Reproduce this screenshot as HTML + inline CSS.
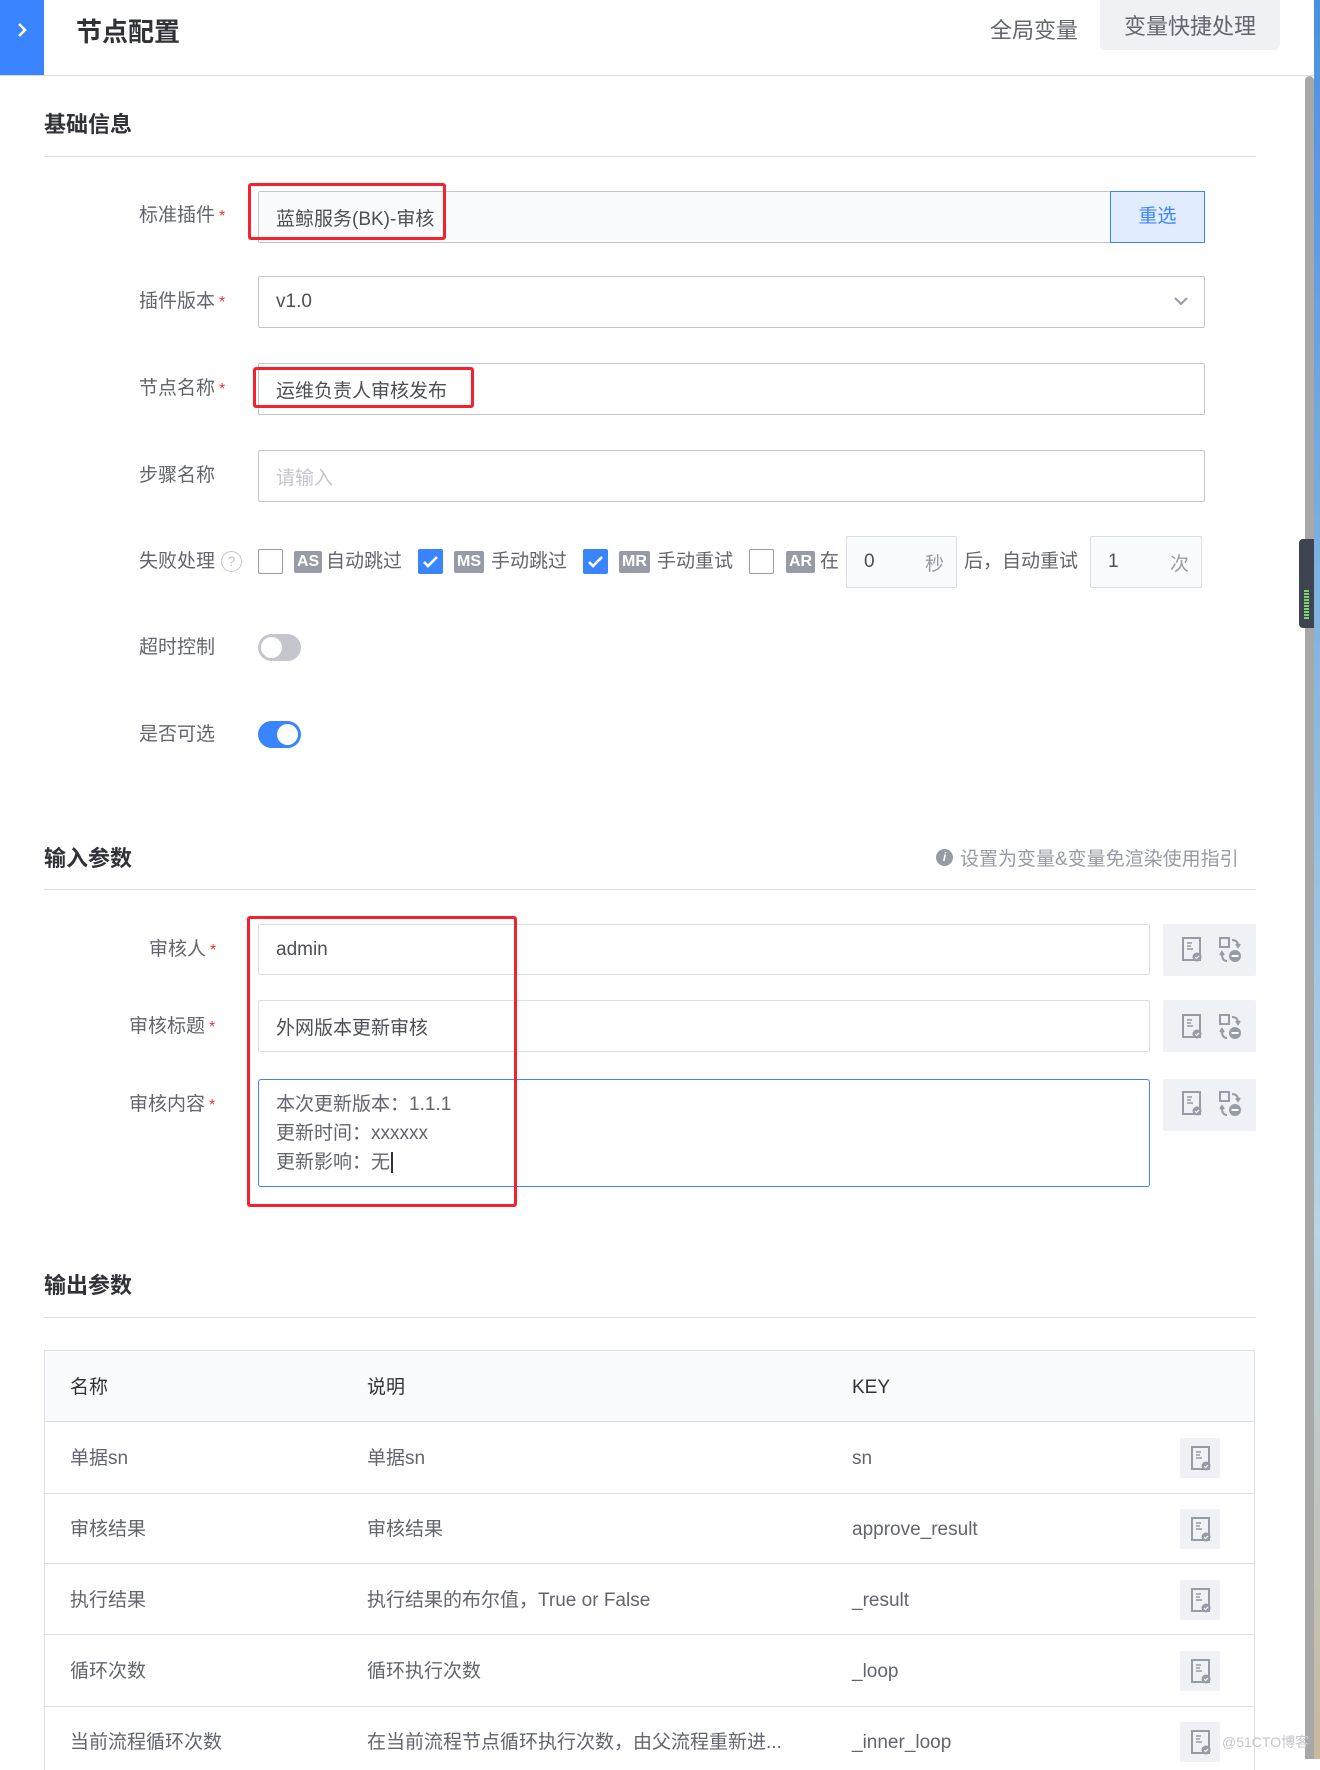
<!DOCTYPE html>
<html><head><meta charset="utf-8"><style>
*{box-sizing:border-box;margin:0;padding:0}
body{width:1320px;height:1759px;position:relative;overflow:hidden;background:#fff;font-family:"Liberation Sans","Noto Sans CJK SC",sans-serif;color:#63656e}
.a{position:absolute}
.lbl{position:absolute;font-size:19px;color:#63656e;line-height:24px}
.req{color:#ea3636;font-size:16px;margin-left:4px}
.inp{position:absolute;border:1px solid #c4c6cc;border-radius:2px;background:#fff;font-size:19px;color:#4d4f56;padding-left:17px;display:flex;align-items:center}
.sec{position:absolute;left:44px;font-size:22px;font-weight:bold;color:#313238}
.line{position:absolute;left:44px;width:1212px;height:1px;background:#dcdee5}
.red{position:absolute;border:3px solid #f5222d;border-radius:3px}
.cb{position:absolute;width:25px;height:25px;border:1px solid #979ba5;border-radius:2px;background:#fff;top:549px}
.cb.on{background:#3a84ff;border-color:#3a84ff}
.tag{position:absolute;top:551px;height:22px;padding:0 3px;background:#979ba5;color:#fff;font-size:16px;line-height:22px;border-radius:2px;font-weight:bold}
.t{position:absolute;font-size:19px;line-height:24px;top:550px;color:#63656e}
.ib{position:absolute;left:1163px;width:93px;height:52px;background:#f0f1f5;border-radius:2px}
.td{position:absolute;font-size:19px;color:#63656e;line-height:24px}
.rb{position:absolute;left:1180px;width:40px;height:40px;background:#f0f1f5;border-radius:2px}
</style></head><body>
<div class="a" style="left:1314px;top:0;width:6px;height:1759px;background:linear-gradient(#4a90e2,#8ab8e0 40%,#b7d6e6 70%,#c9b89a)"></div>
<div class="a" style="left:0;top:0;width:44px;height:75px;background:#3a84ff"></div>
<svg class="a" style="left:12px;top:20px" width="20" height="20" viewBox="0 0 20 20"><path d="M7 4l6 6-6 6" stroke="#fff" stroke-width="2.5" fill="none"/></svg>
<div class="a" style="left:76px;top:12px;font-size:26px;font-weight:bold;color:#313238">节点配置</div>
<div class="a" style="left:990px;top:13px;font-size:22px;color:#63656e">全局变量</div>
<div class="a" style="left:1100px;top:0;width:180px;height:50px;background:#f0f1f5;border-radius:0 0 6px 6px;font-size:22px;line-height:54px;text-align:center;color:#63656e">变量快捷处理</div>
<div class="a" style="left:0;top:75px;width:1314px;height:1px;background:#dcdee5"></div>
<div class="a" style="left:1305px;top:76px;width:9px;height:1683px;background:#a8a8a8;border-radius:5px 5px 0 0"></div>
<div class="a" style="left:1299px;top:539px;width:15px;height:89px;background:#3e4350;border-radius:4px 0 0 4px"></div>
<div class="a" style="left:1304px;top:590px;width:5px;height:30px;background:repeating-linear-gradient(#7dd36f 0 2px,#3e4350 2px 3px)"></div>

<div class="sec" style="top:107px">基础信息</div>
<div class="line" style="top:156px"></div>

<div class="lbl" style="left:139px;top:204px">标准插件<span class="req">*</span></div>
<div class="inp" style="left:258px;top:191px;width:853px;height:52px;background:#fafbfd">蓝鲸服务(BK)-审核</div>
<div class="a" style="left:1110px;top:191px;width:95px;height:52px;background:#e1ecff;border:1px solid #3a84ff;color:#3a84ff;font-size:19px;line-height:50px;text-align:center">重选</div>
<div class="red" style="left:248px;top:183px;width:198px;height:57px"></div>

<div class="lbl" style="left:139px;top:290px">插件版本<span class="req">*</span></div>
<div class="inp" style="left:258px;top:276px;width:947px;height:52px">v1.0</div>
<svg class="a" style="left:1173px;top:295px" width="16" height="12" viewBox="0 0 16 12"><path d="M2 3l6 6 6-6" stroke="#979ba5" stroke-width="2" fill="none"/></svg>

<div class="lbl" style="left:139px;top:377px">节点名称<span class="req">*</span></div>
<div class="inp" style="left:258px;top:363px;width:947px;height:52px">运维负责人审核发布</div>
<div class="red" style="left:253px;top:367px;width:221px;height:41px"></div>

<div class="lbl" style="left:139px;top:464px">步骤名称</div>
<div class="inp" style="left:258px;top:450px;width:947px;height:52px;color:#c4c6cc">请输入</div>

<div class="lbl" style="left:139px;top:550px">失败处理</div>
<div class="a" style="left:221px;top:551px;width:21px;height:21px;border:1px solid #c4c6cc;border-radius:50%;font-size:14px;line-height:19px;text-align:center;color:#c4c6cc">?</div>
<div class="cb" style="left:258px"></div>
<div class="tag" style="left:294px">AS</div><div class="t" style="left:326px">自动跳过</div>
<div class="cb on" style="left:418px"><svg width="23" height="23" viewBox="0 0 23 23"><path d="M5 12l4 4 9-9" stroke="#fff" stroke-width="2.6" fill="none"/></svg></div>
<div class="tag" style="left:454px">MS</div><div class="t" style="left:491px">手动跳过</div>
<div class="cb on" style="left:583px"><svg width="23" height="23" viewBox="0 0 23 23"><path d="M5 12l4 4 9-9" stroke="#fff" stroke-width="2.6" fill="none"/></svg></div>
<div class="tag" style="left:619px">MR</div><div class="t" style="left:657px">手动重试</div>
<div class="cb" style="left:749px"></div>
<div class="tag" style="left:786px">AR</div><div class="t" style="left:820px">在</div>
<div class="inp" style="left:846px;top:536px;width:111px;height:52px;background:#fafbfd;border-color:#dcdee5">0<span style="position:absolute;right:12px;color:#979ba5">秒</span></div>
<div class="t" style="left:964px">后，自动重试</div>
<div class="inp" style="left:1090px;top:536px;width:112px;height:52px;background:#fafbfd;border-color:#dcdee5">1<span style="position:absolute;right:12px;color:#979ba5">次</span></div>

<div class="lbl" style="left:139px;top:636px">超时控制</div>
<div class="a" style="left:258px;top:634px;width:43px;height:27px;border-radius:14px;background:#c4c6cc"><div class="a" style="left:3px;top:3px;width:21px;height:21px;border-radius:50%;background:#fff"></div></div>
<div class="lbl" style="left:139px;top:723px">是否可选</div>
<div class="a" style="left:258px;top:721px;width:43px;height:27px;border-radius:14px;background:#3a84ff"><div class="a" style="left:19px;top:3px;width:21px;height:21px;border-radius:50%;background:#fff"></div></div>

<div class="sec" style="top:841px">输入参数</div>
<div class="a" style="left:936px;top:849px;width:17px;height:17px;border-radius:50%;background:#979ba5;color:#fff;font-size:12px;line-height:17px;text-align:center;font-style:italic;font-weight:bold">i</div>
<div class="a" style="left:960px;top:844px;font-size:19px;color:#979ba5">设置为变量&amp;变量免渲染使用指引</div>
<div class="line" style="top:889px"></div>

<div class="lbl" style="left:149px;top:938px">审核人<span class="req">*</span></div>
<div class="inp" style="left:258px;top:924px;width:892px;height:51px;border-color:#dcdee5">admin</div>
<div class="lbl" style="left:129px;top:1015px">审核标题<span class="req">*</span></div>
<div class="inp" style="left:258px;top:1000px;width:892px;height:52px;border-color:#dcdee5">外网版本更新审核</div>
<div class="lbl" style="left:129px;top:1093px">审核内容<span class="req">*</span></div>
<div class="a" style="left:258px;top:1079px;width:892px;height:108px;border:1px solid #3a84ff;border-radius:3px;font-size:19px;color:#63656e;line-height:29px;padding:10px 0 0 17px">本次更新版本：1.1.1<br>更新时间：xxxxxx<br>更新影响：无<span style="border-left:2px solid #313238;margin-left:1px"></span></div>
<div class="red" style="left:247px;top:916px;width:270px;height:291px"></div>

<div class="ib" style="top:924px"></div><div class="ib" style="top:1000px"></div><div class="ib" style="top:1079px"></div>
<svg width="0" height="0" style="position:absolute"><defs>
<g id="doc"><rect x="1" y="1" width="17" height="22" fill="none" stroke="#979ba5" stroke-width="2"/><path d="M5 6h5M5 9h4M5 12h6" stroke="#979ba5" stroke-width="1.5"/><circle cx="15" cy="20" r="4.5" fill="#979ba5"/><path d="M13 20l1.5 1.5 2.5-2.5" stroke="#fff" stroke-width="1.2" fill="none"/></g>
<g id="sw"><rect x="1" y="1" width="9" height="9" fill="none" stroke="#979ba5" stroke-width="2"/><path d="M13 3c4 0 6 2 6 6M17 7l2 3 2-3M8 24c-4 0-5-3-5-7M1 18l2-3 2 3" stroke="#979ba5" stroke-width="2" fill="none"/><circle cx="16" cy="19" r="6" fill="#979ba5"/><path d="M12.5 19h7" stroke="#fff" stroke-width="2"/></g>
</defs></svg>
<svg class="a" style="left:1182px;top:937px" width="22" height="26"><use href="#doc"/></svg><svg class="a" style="left:1219px;top:937px" width="26" height="26"><use href="#sw"/></svg>
<svg class="a" style="left:1182px;top:1014px" width="22" height="26"><use href="#doc"/></svg><svg class="a" style="left:1219px;top:1014px" width="26" height="26"><use href="#sw"/></svg>
<svg class="a" style="left:1182px;top:1091px" width="22" height="26"><use href="#doc"/></svg><svg class="a" style="left:1219px;top:1091px" width="26" height="26"><use href="#sw"/></svg>

<div class="sec" style="top:1268px">输出参数</div>
<div class="line" style="top:1317px"></div>

<div class="a" style="left:44px;top:1350px;width:1211px;height:420px;border:1px solid #dcdee5;border-bottom:none"></div>
<div class="a" style="left:45px;top:1351px;width:1209px;height:71px;background:#fafbfd;border-bottom:1px solid #dcdee5"></div>
<div class="td" style="left:70px;top:1376px;color:#313238">名称</div><div class="td" style="left:367px;top:1376px;color:#313238">说明</div><div class="td" style="left:852px;top:1376px;color:#313238">KEY</div>
<div class="a" style="left:45px;top:1493px;width:1209px;height:1px;background:#dcdee5"></div>
<div class="a" style="left:45px;top:1563px;width:1209px;height:1px;background:#dcdee5"></div>
<div class="a" style="left:45px;top:1634px;width:1209px;height:1px;background:#dcdee5"></div>
<div class="a" style="left:45px;top:1706px;width:1209px;height:1px;background:#dcdee5"></div>

<div class="td" style="left:70px;top:1447px">单据sn</div><div class="td" style="left:367px;top:1447px">单据sn</div><div class="td" style="left:852px;top:1447px">sn</div>
<div class="td" style="left:70px;top:1518px">审核结果</div><div class="td" style="left:367px;top:1518px">审核结果</div><div class="td" style="left:852px;top:1518px">approve_result</div>
<div class="td" style="left:70px;top:1589px">执行结果</div><div class="td" style="left:367px;top:1589px">执行结果的布尔值，True or False</div><div class="td" style="left:852px;top:1589px">_result</div>
<div class="td" style="left:70px;top:1660px">循环次数</div><div class="td" style="left:367px;top:1660px">循环执行次数</div><div class="td" style="left:852px;top:1660px">_loop</div>
<div class="td" style="left:70px;top:1731px">当前流程循环次数</div><div class="td" style="left:367px;top:1731px">在当前流程节点循环执行次数，由父流程重新进...</div><div class="td" style="left:852px;top:1731px">_inner_loop</div>

<div class="rb" style="top:1438px"></div><div class="rb" style="top:1509px"></div><div class="rb" style="top:1580px"></div><div class="rb" style="top:1651px"></div><div class="rb" style="top:1722px"></div>
<svg class="a" style="left:1191px;top:1446px" width="20" height="26"><use href="#doc"/></svg>
<svg class="a" style="left:1191px;top:1517px" width="20" height="26"><use href="#doc"/></svg>
<svg class="a" style="left:1191px;top:1588px" width="20" height="26"><use href="#doc"/></svg>
<svg class="a" style="left:1191px;top:1659px" width="20" height="26"><use href="#doc"/></svg>
<svg class="a" style="left:1191px;top:1730px" width="20" height="26"><use href="#doc"/></svg>
<div class="a" style="left:1222px;top:1732px;font-size:14px;color:#c4c6cc">@51CTO博客</div>
</body></html>
